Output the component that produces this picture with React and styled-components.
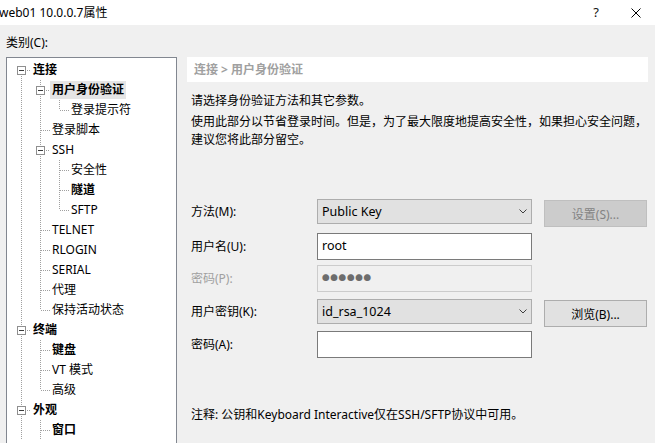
import React from "react";
import styled, { createGlobalStyle } from "styled-components";

const FONT = `"Noto Sans", "Noto Sans CJK SC", sans-serif`;

const GlobalStyle = createGlobalStyle`
  html, body { margin: 0; padding: 0; }
  body {
    background: #f0f0f0;
    font-family: ${FONT};
    font-size: 12px;
    color: #000;
    overflow: hidden;
  }
`;

const Window = styled.div`
  width: 655px;
  height: 443px;
  overflow: hidden;
  display: flex;
  flex-direction: column;
  background: #f0f0f0;
`;

const TitleBar = styled.div`
  height: 25px;
  flex: none;
  background: #fff;
  display: flex;
  align-items: center;
`;

const Title = styled.div`
  flex: 1;
  margin-left: -1px;
  font-size: 12px;
  line-height: 25px;
  white-space: nowrap;
`;

const HelpMark = styled.div`
  width: 12px;
  text-align: center;
  font-size: 13px;
  line-height: 25px;
  margin-right: 29px;
  color: #111;
`;

const CloseMark = styled.svg`
  width: 10px;
  height: 10px;
  margin-right: 14px;
  display: block;
`;

const Body = styled.div`
  flex: 1;
  padding: 0 7px 0 6px;
  display: flex;
  flex-direction: column;
  min-height: 0;
`;

const CategoryLabel = styled.div`
  padding-top: 8px;
  line-height: 20px;
  margin-bottom: 4px;
`;

const Main = styled.div`
  display: flex;
  gap: 10px;
  align-items: flex-start;
`;

const Tree = styled.div`
  box-sizing: border-box;
  width: 171px;
  height: 420px;
  flex: none;
  background: #fff;
  border: 1px solid #828790;
  padding: 2px 0 0 5px;
  display: flex;
  flex-direction: column;
`;

const TreeRow = styled.div`
  display: flex;
  align-items: center;
  height: 20px;
`;

const GuideSvg = styled.svg`
  display: block;
  flex: none;
  width: 19px;
  height: 20px;
`;

const TreeLabel = styled.span`
  padding: 0 2px;
  line-height: 18px;
  white-space: nowrap;
  font-weight: ${(p) => (p.$bold ? 700 : 400)};
  background: ${(p) => (p.$selected ? "#e5e5e5" : "transparent")};
`;

const Panel = styled.div`
  width: 462px;
  display: flex;
  flex-direction: column;
`;

const Breadcrumb = styled.div`
  height: 25px;
  line-height: 25px;
  background: #fff;
  padding-left: 7px;
  color: #a0a0a0;
  font-weight: 700;
  white-space: nowrap;
`;

const Paragraph = styled.p`
  margin: ${(p) => p.$mt}px 0 0 0;
  padding-left: 4px;
  line-height: 18px;
`;

const Form = styled.div`
  margin-top: 50px;
  padding-left: 4px;
  display: grid;
  grid-template-columns: 114px 215px 103px;
  grid-template-rows: 34px 32px 34px 32px 27px;
  column-gap: 12px;
  align-items: start;
`;

const FieldLabel = styled.div`
  grid-column: 1;
  line-height: ${(p) => p.$h}px;
  color: ${(p) => (p.$disabled ? "#a0a0a0" : "#000")};
  white-space: nowrap;
`;

const Combo = styled.div`
  grid-column: 2;
  box-sizing: border-box;
  height: 25px;
  background: #e1e1e1;
  border: 1px solid #adadad;
  display: flex;
  align-items: center;
  justify-content: space-between;
  padding: 0 4px 0 4px;
`;

const ComboText = styled.span`
  line-height: 23px;
  font-size: 12.5px;
`;

const Chevron = styled.svg`
  width: 8px;
  height: 5px;
  display: block;
`;

const TextInput = styled.div`
  grid-column: 2;
  box-sizing: border-box;
  height: 27px;
  background: ${(p) => (p.$disabled ? "#f0f0f0" : "#fff")};
  border: 1px solid ${(p) => (p.$disabled ? "#cccccc" : "#7a7a7a")};
  padding-left: 4px;
  line-height: 23px;
  font-size: 12.5px;
  color: ${(p) => (p.$disabled ? "#6d6d6d" : "#000")};
`;

const Dots = styled.span`
  font-size: 7.5px;
  letter-spacing: 0.8px;
  line-height: 25px;
  vertical-align: top;
`;

const Button = styled.div`
  grid-column: 3;
  box-sizing: border-box;
  margin-top: 1px;
  height: 27px;
  background: ${(p) => (p.$disabled ? "#cccccc" : "#e1e1e1")};
  border: 1px solid ${(p) => (p.$disabled ? "#bfbfbf" : "#adadad")};
  color: ${(p) => (p.$disabled ? "#838383" : "#000")};
  display: flex;
  align-items: center;
  justify-content: center;
  white-space: nowrap;
`;

const Note = styled.p`
  margin: 48px 0 0 0;
  padding-left: 4px;
  line-height: 18px;
  white-space: nowrap;
`;

const treeItems = [
  { label: "连接", level: 0, box: true, bold: true, first: true, anc: [] },
  { label: "用户身份验证", level: 1, box: true, bold: true, selected: true, anc: [1] },
  { label: "登录提示符", level: 2, last: true, anc: [1, 1] },
  { label: "登录脚本", level: 1, anc: [1] },
  { label: "SSH", level: 1, box: true, anc: [1] },
  { label: "安全性", level: 2, anc: [1, 1] },
  { label: "隧道", level: 2, bold: true, anc: [1, 1] },
  { label: "SFTP", level: 2, last: true, anc: [1, 1] },
  { label: "TELNET", level: 1, anc: [1] },
  { label: "RLOGIN", level: 1, anc: [1] },
  { label: "SERIAL", level: 1, anc: [1] },
  { label: "代理", level: 1, anc: [1] },
  { label: "保持活动状态", level: 1, last: true, anc: [1] },
  { label: "终端", level: 0, box: true, bold: true, anc: [] },
  { label: "键盘", level: 1, bold: true, anc: [1] },
  { label: "VT 模式", level: 1, anc: [1] },
  { label: "高级", level: 1, last: true, anc: [1] },
  { label: "外观", level: 0, box: true, bold: true, anc: [] },
  { label: "窗口", level: 1, bold: true, anc: [1] },
];

const DOT = { stroke: "#a0a0a0", strokeWidth: 1, strokeDasharray: "1 1", shapeRendering: "crispEdges" };

function Guide({ pass, own, top, bottom, box }) {
  return (
    <GuideSvg viewBox="0 0 19 20">
      {pass && <line x1="9.5" y1="0" x2="9.5" y2="20" {...DOT} />}
      {own && top && <line x1="9.5" y1="0" x2="9.5" y2={box ? 6 : 10} {...DOT} />}
      {own && bottom && <line x1="9.5" y1={box ? 16 : 10} x2="9.5" y2="20" {...DOT} />}
      {own && <line x1={box ? 15 : 10} y1="10.5" x2="19" y2="10.5" {...DOT} />}
      {own && box && (
        <>
          <rect x="5.5" y="6.5" width="8" height="8" fill="#fff" stroke="#8f8f8f" shapeRendering="crispEdges" />
          <line x1="7" y1="10.5" x2="12" y2="10.5" stroke="#3a3a3a" shapeRendering="crispEdges" />
        </>
      )}
    </GuideSvg>
  );
}

function TreeItem({ item }) {
  return (
    <TreeRow>
      {item.anc.map((a, i) => (
        <Guide key={i} pass={!!a} />
      ))}
      <Guide own top={!item.first} bottom={!item.last} box={item.box} />
      <TreeLabel $bold={item.bold} $selected={item.selected}>
        {item.label}
      </TreeLabel>
    </TreeRow>
  );
}

function ComboChevron() {
  return (
    <Chevron viewBox="0 0 8 5">
      <polyline points="0.5,0.5 4,4 7.5,0.5" fill="none" stroke="#404040" strokeWidth="1" />
    </Chevron>
  );
}

export default function App() {
  return (
    <>
      <GlobalStyle />
      <Window>
        <TitleBar>
          <Title>web01 10.0.0.7属性</Title>
          <HelpMark>?</HelpMark>
          <CloseMark viewBox="0 0 10 10">
            <path d="M0.5 0.5 L9.5 9.5 M9.5 0.5 L0.5 9.5" stroke="#000" strokeWidth="1" fill="none" />
          </CloseMark>
        </TitleBar>
        <Body>
          <CategoryLabel>类别(C):</CategoryLabel>
          <Main>
            <Tree>
              {treeItems.map((item, i) => (
                <TreeItem key={i} item={item} />
              ))}
            </Tree>
            <Panel>
              <Breadcrumb>连接 &gt; 用户身份验证</Breadcrumb>
              <Paragraph $mt={10}>请选择身份验证方法和其它参数。</Paragraph>
              <Paragraph $mt={3}>
                使用此部分以节省登录时间。但是，为了最大限度地提高安全性，如果担心安全问题，
                <br />
                建议您将此部分留空。
              </Paragraph>
              <Form>
                <FieldLabel $h={25}>方法(M):</FieldLabel>
                <Combo>
                  <ComboText>Public Key</ComboText>
                  <ComboChevron />
                </Combo>
                <Button $disabled>设置(S)...</Button>

                <FieldLabel $h={27}>用户名(U):</FieldLabel>
                <TextInput>root</TextInput>

                <FieldLabel $h={27} $disabled>密码(P):</FieldLabel>
                <TextInput $disabled>
                  <Dots>●●●●●●</Dots>
                </TextInput>

                <FieldLabel $h={25}>用户密钥(K):</FieldLabel>
                <Combo>
                  <ComboText>id_rsa_1024</ComboText>
                  <ComboChevron />
                </Combo>
                <Button>浏览(B)...</Button>

                <FieldLabel $h={27}>密码(A):</FieldLabel>
                <TextInput />
              </Form>
              <Note>注释: 公钥和Keyboard Interactive仅在SSH/SFTP协议中可用。</Note>
            </Panel>
          </Main>
        </Body>
      </Window>
    </>
  );
}
